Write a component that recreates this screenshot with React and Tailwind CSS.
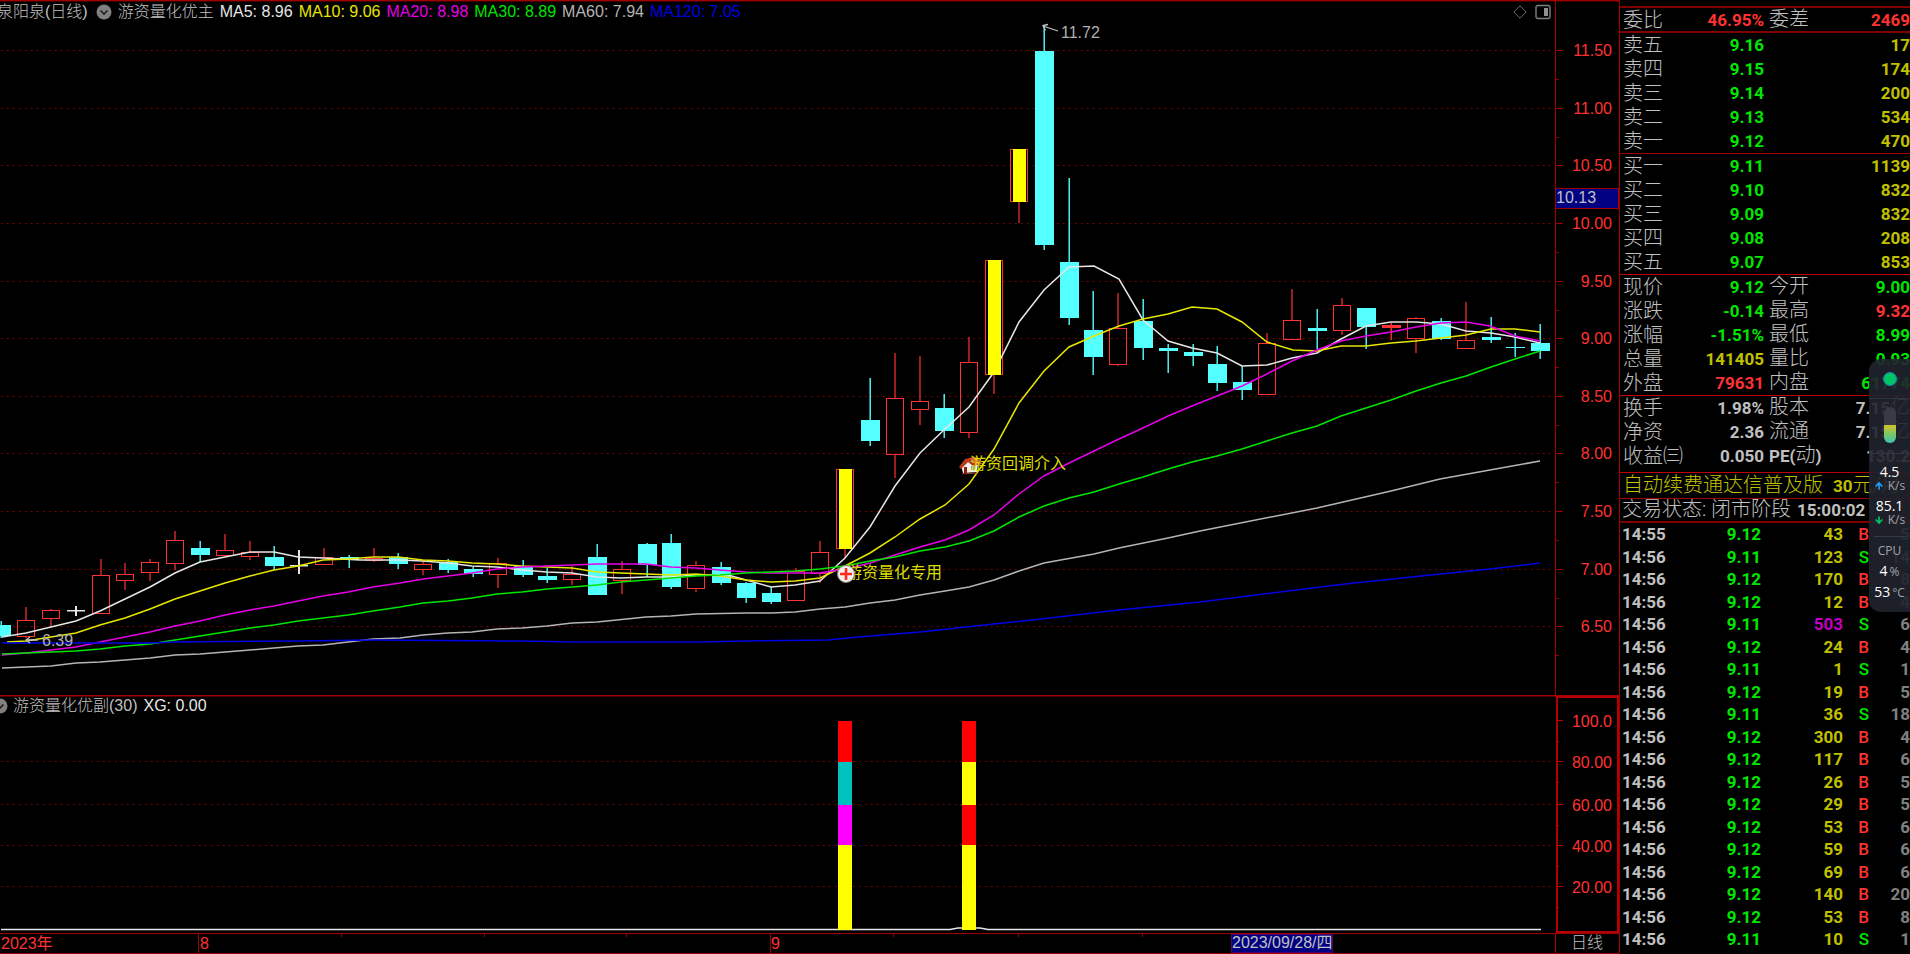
import React from "react";
import { ArrowDown, ArrowUp } from "lucide-react";

const FIRST_X = 1.3;
const STEP = 24.82;
const candleX = (i) => Math.round(FIRST_X + STEP * i);

// [type, high, bodyTop, bodyBottom, low]
// u = up (hollow), d = down (filled), l = limit up, x = flat, r = flat red
const candles = [
  ["d", 621, 625, 636, 638],
  ["u", 607, 620, 636, 638],
  ["u", 609, 610, 618, 627],
  ["x", 606, 610, 611, 616],
  ["u", 559, 575, 613, 613],
  ["u", 563, 574, 580, 590],
  ["u", 559, 562, 572, 581],
  ["u", 531, 540, 563, 570],
  ["d", 541, 548, 555, 562],
  ["u", 534, 550, 555, 556],
  ["u", 541, 552, 556, 560],
  ["d", 546, 557, 566, 570],
  ["x", 550, 565, 566, 574],
  ["u", 548, 557, 564, 564],
  ["d", 555, 557, 560, 568],
  ["u", 548, 558, 560, 562],
  ["d", 553, 557, 564, 569],
  ["u", 560, 564, 569, 575],
  ["d", 559, 562, 570, 573],
  ["d", 567, 569, 574, 577],
  ["u", 558, 563, 574, 588],
  ["d", 560, 566, 575, 577],
  ["d", 568, 576, 580, 583],
  ["u", 566, 574, 579, 585],
  ["d", 544, 557, 595, 595],
  ["u", 561, 569, 580, 594],
  ["d", 543, 544, 565, 577],
  ["d", 534, 543, 587, 589],
  ["u", 561, 565, 588, 592],
  ["d", 562, 567, 583, 585],
  ["d", 582, 583, 598, 603],
  ["d", 587, 593, 602, 604],
  ["u", 568, 571, 600, 600],
  ["u", 541, 552, 573, 583],
  ["l", 469, 469, 548, 558],
  ["d", 378, 420, 441, 446],
  ["u", 353, 398, 454, 478],
  ["u", 356, 401, 409, 425],
  ["d", 394, 408, 431, 438],
  ["u", 337, 362, 432, 438],
  ["l", 260, 260, 374, 394],
  ["l", 149, 149, 201, 223],
  ["d", 25, 51, 245, 250],
  ["d", 178, 262, 318, 325],
  ["d", 291, 330, 357, 375],
  ["u", 293, 328, 364, 366],
  ["d", 299, 321, 348, 360],
  ["d", 344, 348, 351, 373],
  ["d", 344, 352, 356, 366],
  ["d", 346, 364, 383, 391],
  ["d", 366, 382, 390, 400],
  ["u", 333, 343, 394, 394],
  ["u", 289, 320, 339, 339],
  ["d", 309, 328, 331, 349],
  ["u", 298, 305, 330, 335],
  ["d", 308, 308, 327, 349],
  ["r", 323, 325, 328, 340],
  ["u", 317, 318, 338, 353],
  ["d", 318, 321, 339, 340],
  ["u", 302, 340, 348, 348],
  ["d", 317, 337, 340, 343],
  ["d", 333, 347, 348, 357],
  ["d", 324, 343, 351, 359],
];

const averages = [
  {
    name: "MA5",
    value: "8.96",
    text: "text-[#e6e6e6]",
    stroke: "#e6e6e6",
    points:
      "2,637 26,633 51,627 76,621 100,611 125,599 150,587 175,573 200,562 225,557 250,552 274,552 298,557 323,558 360,560 400,560 423,561 448,563 472,566 497,567 522,570 547,572 572,573 597,577 621,578 646,577 671,577 696,575 728,575 746,580 771,587 795,585 820,581 845,558 870,527 895,486 920,453 945,429 969,407 994,372 1019,322 1044,290 1069,267 1094,266 1119,279 1143,320 1168,341 1192,348 1217,353 1242,366 1267,365 1292,358 1317,353 1341,339 1366,326 1391,322 1416,322 1441,324 1466,331 1491,333 1515,337 1540,343",
  },
  {
    name: "MA10",
    value: "9.06",
    text: "text-[#e6e600]",
    stroke: "#e6e600",
    points:
      "7,642 26,641 51,637 76,633 100,625 125,618 150,609 175,599 200,591 225,583 250,576 274,570 298,566 323,560 348,559 373,557 398,557 423,560 448,561 472,563 497,564 522,566 547,567 572,568 597,572 621,573 646,574 671,575 696,574 720,576 746,580 771,582 795,581 820,578 845,566 870,553 895,537 920,519 945,505 969,484 994,449 1019,403 1044,371 1069,347 1094,336 1119,326 1143,319 1168,314 1192,307 1217,309 1242,322 1267,342 1293,350 1317,351 1341,346 1366,346 1391,343 1416,341 1441,338 1466,335 1491,329 1515,329 1540,332",
  },
  {
    name: "MA20",
    value: "8.98",
    text: "text-[#e600e6]",
    stroke: "#e600e6",
    points:
      "2,655 26,653 51,650 76,647 100,642 125,637 150,632 175,626 200,621 225,615 250,610 274,606 298,601 323,596 348,592 373,587 400,583 423,579 448,576 472,573 497,569 522,567 547,566 572,565 597,564 646,564 671,567 696,568 720,570 746,572 771,573 820,573 845,569 870,563 895,555 920,547 945,540 969,530 994,515 1019,494 1044,476 1069,463 1094,451 1119,439 1143,428 1168,416 1192,406 1217,396 1242,386 1267,374 1292,361 1317,350 1341,341 1366,336 1391,332 1416,327 1441,323 1466,322 1490,326 1515,336 1540,341",
  },
  {
    name: "MA30",
    value: "8.89",
    text: "text-[#00e600]",
    stroke: "#00e600",
    points:
      "2,654 26,653 51,652 76,651 100,649 125,646 150,644 175,640 200,636 225,632 250,628 274,625 298,621 323,618 348,615 373,611 400,607 423,603 448,601 472,598 497,594 522,592 547,589 572,587 597,585 621,582 646,580 671,578 696,576 720,575 746,573 771,572 795,571 820,569 845,566 870,561 895,557 920,551 945,547 969,541 994,531 1019,517 1044,506 1069,498 1094,492 1119,484 1143,477 1168,469 1192,462 1217,456 1242,449 1267,441 1292,433 1317,426 1341,416 1366,408 1391,400 1416,391 1441,383 1466,376 1491,367 1515,359 1540,351",
  },
  {
    name: "MA60",
    value: "7.94",
    text: "text-[#b4b4b4]",
    stroke: "#b4b4b4",
    points:
      "2,668 26,667 51,666 76,663 100,662 125,660 150,658 175,655 200,654 225,652 250,650 274,648 298,646 323,645 348,642 373,639 400,638 423,635 448,633 472,632 497,629 522,628 547,626 572,623 597,622 646,617 671,616 696,614 746,613 771,613 795,612 820,609 845,607 870,603 895,600 920,595 945,591 969,587 994,580 1019,571 1044,563 1094,554 1119,548 1168,538 1200,531 1317,508 1391,491 1440,479 1490,470 1540,461",
  },
  {
    name: "MA120",
    value: "7.05",
    text: "text-[#0000e6]",
    stroke: "#0000e6",
    points:
      "2,643 150,643 175,642 298,641 373,640 522,641 572,642 700,642 746,641 828,640 858,637 920,632 994,624 1032,620 1119,610 1200,602 1345,584 1440,574 1490,569 1540,563",
  },
];

const prices = [
  "11.50",
  "11.00",
  "10.50",
  "10.00",
  "9.50",
  "9.00",
  "8.50",
  "8.00",
  "7.50",
  "7.00",
  "6.50",
];
const priceY = (i) => Math.floor(50.7 + 57.6 * i) + 0.5;

const levels = [
  ["100.0", 25],
  ["80.00", 66],
  ["60.00", 109],
  ["40.00", 150],
  ["20.00", 191],
];

const RED = "text-[#ff3232]";
const GREEN = "text-[#00e600]";
const YELLOW = "text-[#c0c000]";
const GRAY = "text-[#c0c0c0]";

const sells = [
  ["卖五", "9.16", GREEN, "", "17", YELLOW],
  ["卖四", "9.15", GREEN, "", "174", YELLOW],
  ["卖三", "9.14", GREEN, "", "200", YELLOW],
  ["卖二", "9.13", GREEN, "", "534", YELLOW],
  ["卖一", "9.12", GREEN, "", "470", YELLOW],
];

const buys = [
  ["买一", "9.11", GREEN, "", "1139", YELLOW],
  ["买二", "9.10", GREEN, "", "832", YELLOW],
  ["买三", "9.09", GREEN, "", "832", YELLOW],
  ["买四", "9.08", GREEN, "", "208", YELLOW],
  ["买五", "9.07", GREEN, "", "853", YELLOW],
];

const quotes = [
  ["现价", "9.12", GREEN, "今开", "9.00", GREEN],
  ["涨跌", "-0.14", GREEN, "最高", "9.32", RED],
  ["涨幅", "-1.51%", GREEN, "最低", "8.99", GREEN],
  ["总量", "141405", YELLOW, "量比", "0.93", GREEN],
  ["外盘", "79631", RED, "内盘", "61774", GREEN],
];

const finance = [
  ["换手", "1.98%", GRAY, "股本", "7.15亿", GRAY],
  ["净资", "2.36", GRAY, "流通", "7.15亿", GRAY],
  ["收益㈢", "0.050", GRAY, "PE(动)", "130.2", GRAY],
];

const trades = [
  ["14:55", "9.12", "43", "B", "5"],
  ["14:56", "9.11", "123", "S", "14"],
  ["14:56", "9.12", "170", "B", "8"],
  ["14:56", "9.12", "12", "B", "4"],
  ["14:56", "9.11", "503", "S", "6"],
  ["14:56", "9.12", "24", "B", "4"],
  ["14:56", "9.11", "1", "S", "1"],
  ["14:56", "9.12", "19", "B", "5"],
  ["14:56", "9.11", "36", "S", "18"],
  ["14:56", "9.12", "300", "B", "4"],
  ["14:56", "9.12", "117", "B", "6"],
  ["14:56", "9.12", "26", "B", "5"],
  ["14:56", "9.12", "29", "B", "5"],
  ["14:56", "9.12", "53", "B", "6"],
  ["14:56", "9.12", "59", "B", "6"],
  ["14:56", "9.12", "69", "B", "6"],
  ["14:56", "9.12", "140", "B", "20"],
  ["14:56", "9.12", "53", "B", "8"],
  ["14:56", "9.11", "10", "S", "1"],
];

const Candle = ({ x, data }) => {
  const [type, high, top, bottom, low] = data;

  if (type === "x") {
    return (
      <g fill="#e6e6e6">
        <rect x={x - 1} y={high} width="2" height={low - high} />
        <rect x={x - 9} y={top} width="18" height="1.5" />
      </g>
    );
  }

  if (type === "d" || type === "r") {
    return (
      <g fill={type === "d" ? "#54ffff" : "#ff3232"}>
        <rect x={x - 0.5} y={high} width="1.4" height={low - high} />
        <rect x={x - 9} y={top} width="19" height={bottom - top} />
      </g>
    );
  }

  return (
    <g fill="none" stroke="#ff3232">
      <path
        d={`M${x} ${high}V${top}M${x} ${bottom}V${low}`}
        strokeWidth="1.4"
        opacity="0.85"
      />
      <rect x={x - 8.5} y={top + 0.5} width="17" height={bottom - top} />
    </g>
  );
};

const DropIcon = () => (
  <svg viewBox="0 0 16 16" className="h-4 w-4 shrink-0">
    <circle cx="8" cy="8" r="7.5" fill="#808080" />
    <path d="M4.5 6.5 8 10l3.5-3.5" fill="none" stroke="#202020" strokeWidth="1.6" />
  </svg>
);

const MainChart = () => (
  <svg
    viewBox="0 0 1619 695"
    className="block h-auto w-full font-['Liberation_Sans','Noto_Sans_CJK_SC',sans-serif] text-[16px]"
  >
    {/* frame */}
    <rect width="1619" height="1.4" fill="#a00000" />
    <rect x="1555" width="1" height="695" fill="#a00000" />

    {/* grid + price axis */}
    {prices.map((p, i) => (
      <g key={p}>
        <path
          d={`M1 ${priceY(i)}H1555`}
          stroke="#8c0000"
          strokeWidth="1.2"
          strokeDasharray="1.6 4.4"
        />
        <path
          d={`M1556 ${priceY(i)}H1563M1556 ${priceY(i) + 29}H1559`}
          stroke="#a00000"
        />
        <text x="1612" y={priceY(i) + 5.5} textAnchor="end" fill="#ff3232">
          {p}
        </text>
      </g>
    ))}
    <rect x="1555.5" y="188.5" width="63" height="20" fill="#000080" stroke="#a00000" />
    <text x="1556" y="203" fill="#c0c0c0">
      10.13
    </text>

    {/* candles */}
    {candles.map((c, i) => (
      <Candle key={i} x={candleX(i)} data={c} />
    ))}

    {/* moving averages */}
    {averages.map((m) => (
      <polyline
        key={m.name}
        points={m.points}
        fill="none"
        stroke={m.stroke}
        strokeWidth="1.5"
      />
    ))}

    {/* limit-up fill goes over the averages */}
    {candles.map(
      ([type, , top, bottom], i) =>
        type === "l" && (
          <rect
            key={i}
            x={candleX(i) - 6}
            y={top}
            width="13"
            height={bottom - top + 1}
            fill="#ffff00"
          />
        )
    )}

    {/* high / low marks */}
    <g fill="none" stroke="#c0c0c0" strokeWidth="1.3">
      <path d="M1058 31 1043 26M1048 24.5l-5 1 2.5 5" />
      <path d="M38 640H26M30 637l-4 3 4 3" />
    </g>
    <text x="1061" y="38" fill="#b0b0b0">
      11.72
    </text>
    <text x="42" y="646" fill="#b0b0b0">
      6.39
    </text>

    {/* signals */}
    <text x="846" y="578" fill="#dcdc00">
      游资量化专用
    </text>
    <circle cx="846" cy="574" r="8.5" fill="#f4f0ee" stroke="#8a8078" />
    <path d="M846 568v12M840 574h12" stroke="#ff2a1a" strokeWidth="2.6" />

    <g>
      <path d="M961 465l2 8 14-1 1-8-9-5z" fill="#f3f0ee" />
      <path d="M959 467l6-8 8-2 8 7-8 2-5-4-7 7z" fill="#b8391c" />
      <path d="M970 458l7-1 5 7-7 1z" fill="#d9653c" />
      <rect x="964" y="467" width="3" height="6" fill="#8f1d10" />
      <rect x="971" y="466" width="4" height="4" fill="#9aa4b4" />
      <path d="M962 474l15-1" stroke="#a33a24" />
    </g>
    <text x="970" y="469" fill="#dcdc00">
      游资回调介入
    </text>
  </svg>
);

const SubChart = () => (
  <svg
    viewBox="0 0 1619 259"
    className="block h-auto w-full font-['Liberation_Sans','Noto_Sans_CJK_SC',sans-serif] text-[16px]"
  >
    <rect width="1619" height="1.5" fill="#a00000" />
    {levels.map(([label, y], i) => (
      <g key={label}>
        {i > 0 && (
          <path
            d={`M1 ${y + 0.5}H1555`}
            stroke="#8c0000"
            strokeWidth="1.2"
            strokeDasharray="1.6 4.4"
          />
        )}
        <path d={`M1556 ${y + 0.5}H1563M1556 ${y + 21.5}H1559`} stroke="#c00000" />
        <text x="1612" y={y + 7} textAnchor="end" fill="#ff3232">
          {label}
        </text>
      </g>
    ))}
    <rect
      x="1557"
      y="2"
      width="61"
      height="235"
      fill="none"
      stroke="#b40000"
      strokeWidth="2"
    />

    {/* XG line */}
    <path d="M1 234.5H950l8-1.5h22l8 1.5h553" fill="none" stroke="#e6e6e6" strokeWidth="1.4" />

    {/* signal bars */}
    <rect x="838" y="26" width="14" height="41" fill="#ff0000" />
    <rect x="838" y="67" width="14" height="43" fill="#00c0c0" />
    <rect x="838" y="110" width="14" height="40" fill="#ff00ff" />
    <rect x="838" y="150" width="14" height="85" fill="#ffff00" />
    <rect x="962" y="26" width="14" height="41" fill="#ff0000" />
    <rect x="962" y="67" width="14" height="43" fill="#ffff00" />
    <rect x="962" y="110" width="14" height="40" fill="#ff0000" />
    <rect x="962" y="150" width="14" height="85" fill="#ffff00" />

    {/* time axis */}
    <path
      d="M0 238.5H1619M0 258.5H1619M1555.5 238V259M198.5 238V259M770.5 238V259M341.5 238v4M484.5 238v4M626.5 238v4M893.5 238v4M1018.5 238v4M1142.5 238v4"
      stroke="#a00000"
    />
    <g fill="#ff3232">
      <text x="1" y="254">
        2023年
      </text>
      <text x="200" y="254">
        8
      </text>
      <text x="771" y="254">
        9
      </text>
    </g>
    <rect x="1231.5" y="239.5" width="101" height="18" fill="#000080" stroke="#50006a" />
    <text x="1232" y="253" fill="#c0c0c0">
      2023/09/28/四
    </text>
    <text x="1571" y="253" fill="#c0c0c0" fontWeight="300">
      日线
    </text>
  </svg>
);

// Chinese glyphs inside the bold number cells
const Han = ({ children }) => (
  <span className="text-[20px] font-light leading-none">{children}</span>
);

const QuoteTable = ({ rows }) => (
  <table className="w-full table-fixed border-collapse">
    <colgroup>
      <col className="w-[68px]" />
      <col className="w-[76px]" />
      <col className="w-[66px]" />
      <col />
    </colgroup>
    <tbody>
      {rows.map(([label, value, color, label2, value2, color2]) => (
        <tr key={label} className="h-6 leading-[22px]">
          <th className="whitespace-nowrap p-0 pl-[3px] text-left text-[20px] font-light">
            {label}
          </th>
          <td className={`p-0 text-right font-bold ${color}`}>{value}</td>
          <th className="whitespace-nowrap p-0 pl-[5px] text-left font-bold">
            {label2 === "PE(动)" ? (
              <>
                PE(<Han>动</Han>)
              </>
            ) : (
              <Han>{label2}</Han>
            )}
          </th>
          <td className={`whitespace-nowrap p-0 text-right font-bold ${color2}`}>
            {value2.replace("亿", "")}
            {value2.includes("亿") && <Han>亿</Han>}
          </td>
        </tr>
      ))}
    </tbody>
  </table>
);

const MonitorWidget = () => (
  <div className="absolute right-0 top-[359px] flex h-[253px] w-[41px] flex-col items-center rounded-l-xl bg-[#20222d]/90 font-['Open_Sans','Noto_Sans',sans-serif] text-[12px] leading-4 text-[#a0a3ab]">
    <span className="mt-[13px] h-3.5 w-3.5 shrink-0 rounded-full border border-[#1c7fc0] bg-[#00c566]" />
    <span className="mt-3 h-px w-full shrink-0 bg-[#2f3440]" />
    <span className="mt-2 flex h-9 w-3 shrink-0 flex-col justify-end overflow-hidden rounded-full bg-[#383b45]">
      <span className="h-[18px] bg-linear-to-b from-[#d2c020] via-[#7cc860] to-[#30c0b4]" />
    </span>
    <span className="mt-2.5 h-px w-full shrink-0 bg-[#2f3440]" />
    <span className="mt-2.5 text-[14px] text-white">4.5</span>
    <span className="flex items-center gap-1 leading-3">
      <ArrowUp className="h-3 w-2.5 text-[#1ea0ff]" strokeWidth={4} />
      K/s
    </span>
    <span className="mt-1.5 text-[14px] text-white">85.1</span>
    <span className="flex items-center gap-1 leading-3">
      <ArrowDown className="h-3 w-2.5 text-[#00c566]" strokeWidth={4} />
      K/s
    </span>
    <span className="mt-2.5 h-px w-8 shrink-0 bg-[#343b48]" />
    <span className="mt-1.5">CPU</span>
    <span className="mt-1 flex items-baseline gap-0.5">
      <span className="text-[14px] text-white">4</span>%
    </span>
    <span className="mt-1 flex items-baseline gap-0.5">
      <span className="text-[14px] text-white">53</span>°C
    </span>
  </div>
);

const App = () => {
  return (
    <div className="relative flex min-h-screen items-start overflow-hidden bg-black font-['Liberation_Sans','Noto_Sans_CJK_SC',sans-serif] text-[16px]">
      {/* ================= CHARTS ================= */}
      <main className="min-w-0 flex-1">
        <section className="relative">
          <MainChart />
          <header className="absolute inset-x-0 top-[3px] flex h-[18px] items-center overflow-hidden whitespace-nowrap leading-[18px]">
            <h1 className="-ml-[3px] font-light text-[#c0c0c0]">泉阳泉(日线)</h1>
            <button type="button" aria-label="指标" className="ml-2 mr-1.5">
              <DropIcon />
            </button>
            <span className="mr-1.5 font-light text-[#c0c0c0]">游资量化优主</span>
            <div className="flex gap-1.5">
              {averages.map((m) => (
                <span key={m.name} className={m.text}>
                  {m.name}: {m.value}
                </span>
              ))}
            </div>
            <div className="ml-auto mr-[68px] flex items-center gap-2">
              <svg viewBox="0 0 14 14" className="h-3.5 w-3.5">
                <path d="M7 .8 13.2 7 7 13.2.8 7z" fill="none" stroke="#707070" />
              </svg>
              <svg viewBox="0 0 16 16" className="h-4 w-4">
                <rect x="1" y="1.5" width="14" height="13" rx="2" fill="none" stroke="#808080" strokeWidth="1.4" />
                <rect x="9" y="4" width="4" height="8" fill="#909090" />
              </svg>
            </div>
          </header>
        </section>

        <section className="relative">
          <SubChart />
          <header className="absolute left-0 top-0.5 flex h-[18px] items-center whitespace-nowrap leading-[18px]">
            <button type="button" aria-label="副图指标" className="-ml-2">
              <DropIcon />
            </button>
            <span className="ml-[5px] font-light text-[#c0c0c0]">游资量化优副(30)</span>
            <span className="ml-1.5 text-[#e6e6e6]">XG: 0.00</span>
          </header>
        </section>
      </main>

      {/* ================= QUOTE PANEL ================= */}
      <aside className="w-[291px] shrink-0 self-stretch border-l border-[#a00000] pt-1.5 font-['Roboto','Noto_Sans_CJK_SC',sans-serif] text-[17px] text-[#c0c0c0]">
        <section className="h-[25px] border-t-2 border-[#800000]">
          <QuoteTable rows={[["委比", "46.95%", RED, "委差", "2469", RED]]} />
        </section>
        <section className="border-t-2 border-[#800000]">
          <QuoteTable rows={sells} />
        </section>
        <section className="border-t border-[#a00000]">
          <QuoteTable rows={buys} />
        </section>
        <section className="border-t border-[#c00000]">
          <QuoteTable rows={quotes} />
        </section>
        <section className="border-t border-[#c00000] pb-1">
          <QuoteTable rows={finance} />
        </section>
        <p className="h-[26px] overflow-hidden whitespace-nowrap border-t border-[#c00000] pl-[3px] text-[20px] font-light leading-6 text-[#c0c000]">
          自动续费通达信普及版
          <span className="ml-2.5 text-[17px] font-bold">30</span>元/月
        </p>
        <p className="h-[23px] overflow-hidden whitespace-nowrap border-t border-[#a00000] pl-0.5 text-[20px] font-light leading-5">
          交易状态: 闭市阶段
          <span className="ml-1.5 text-[17px] font-bold leading-none">15:00:02</span>
        </p>

        <table className="w-full table-fixed border-collapse border-t-2 border-[#800000] font-bold">
          <colgroup>
            <col className="w-[60px]" />
            <col className="w-[81px]" />
            <col className="w-[82px]" />
            <col className="w-[26px]" />
            <col />
          </colgroup>
          <tbody>
            {trades.map(([time, price, volume, side, count], i) => (
              <tr key={i} className="leading-[22px] odd:h-[22px] even:h-[23px]">
                <td className="p-0 pl-0.5">{time}</td>
                <td className={`p-0 text-right ${GREEN}`}>{price}</td>
                <td
                  className={`p-0 text-right ${
                    volume === "503" ? "text-[#c000c0]" : YELLOW
                  }`}
                >
                  {volume}
                </td>
                <td
                  className={`p-0 text-right font-medium ${side === "B" ? RED : GREEN}`}
                >
                  {side}
                </td>
                <td className="p-0 text-right text-[#808080]">{count}</td>
              </tr>
            ))}
          </tbody>
        </table>
      </aside>

      <MonitorWidget />
    </div>
  );
};

export default App;
